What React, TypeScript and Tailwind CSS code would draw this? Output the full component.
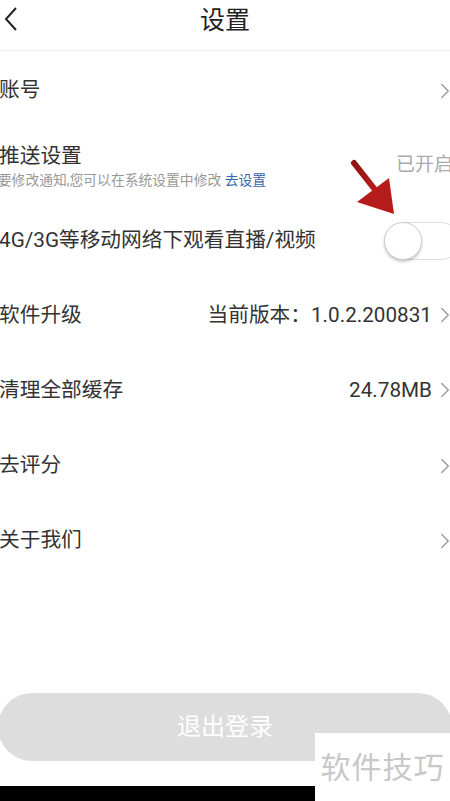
import { ChevronRight } from "lucide-react";

const font = { fontFamily: 'Roboto, "Noto Sans CJK SC", "Noto Sans", sans-serif' };

const Row = ({
  label,
  value,
  arrow = true,
}: {
  label: string;
  value?: string;
  arrow?: boolean;
}) => (
  <div className="flex h-[75px] items-center justify-between pl-[9px] pr-[2px]">
    <span className="text-[20.7px] text-[#333333]">{label}</span>
    <div className="flex items-center">
      {value && <span className="text-[20.7px] text-[#333333]">{value}</span>}
      {arrow && <ChevronRight className="h-[26px] w-[26px] text-[#9a9a9a]" strokeWidth={1.3} />}
    </div>
  </div>
);

export default function App() {
  return (
    <div className="relative h-[801px] w-[450px] overflow-hidden bg-white" style={font}>
      <div className="-ml-[10px] w-[470px]">
        <header className="relative flex h-[51px] items-start justify-center border-b border-[#f0f0f0] pt-[8px]">
          <svg className="absolute left-[14px] top-[6px]" width="14" height="26" viewBox="0 0 14 26">
            <polyline points="12,2 2,13 12,24" fill="none" stroke="#222" strokeWidth="2" />
          </svg>
          <h1 className="text-[25px] leading-none text-[#222]">设置</h1>
        </header>

        <div className="pt-[2px]">
          <Row label="账号" />

          <div className="flex h-[75px] items-center justify-between pl-[9px] pr-[6px]">
            <div className="flex flex-col">
              <span className="text-[20.7px] leading-[28px] text-[#333333]">推送设置</span>
              <span className="-ml-[15px] text-[13.8px] leading-[20px] text-[#999999]">
                需要修改通知,您可以在系统设置中修改 <span className="text-[#3b64b0]">去设置</span>
              </span>
            </div>
            <span className="mr-[1px] text-[19px] text-[#aaaaaa]">已开启</span>
          </div>

          <div className="flex h-[75px] items-center justify-between pl-[9px]">
            <span className="text-[20.7px] text-[#333333]">4G/3G等移动网络下观看直播/视频</span>
            <div className="relative h-[38px] w-[76px] rounded-full border border-[#dedede] bg-white">
              <div className="absolute -left-[1px] -top-[1px] h-[38px] w-[38px] rounded-full border border-[#d0d0d0] bg-white shadow-[0_2px_3px_rgba(0,0,0,0.22)]" />
            </div>
          </div>

          <Row label="软件升级" value="当前版本：1.0.2.200831" />
          <Row label="清理全部缓存" value="24.78MB" />
          <Row label="去评分" />
          <Row label="关于我们" />
        </div>
      </div>

      <div className="mt-[115px] flex">
        <button className="-mx-[2px] flex h-[68px] w-[454px] items-center justify-center rounded-full bg-[#dddddd] text-[24px] text-white">
          退出登录
        </button>
      </div>

      <div className="absolute bottom-0 left-0 h-[15px] w-[315px] bg-black" />
      <div className="absolute bottom-0 right-0 flex h-[68px] w-[135px] items-center justify-center bg-white">
        <span className="text-[30px] tracking-[1px] text-[#c8c8c8]">软件技巧</span>
      </div>

      <svg className="absolute left-0 top-0" width="450" height="801" viewBox="0 0 450 801">
        <defs>
          <linearGradient id="ar" x1="0" y1="0" x2="1" y2="1">
            <stop offset="0" stopColor="#8e1414" />
            <stop offset="1" stopColor="#c21d1d" />
          </linearGradient>
        </defs>
        <line x1="354" y1="163" x2="380" y2="196" stroke="url(#ar)" strokeWidth="6" strokeLinecap="round" />
        <polygon points="357,202 389,178 394,214" fill="#b51b1b" />
      </svg>
    </div>
  );
}
